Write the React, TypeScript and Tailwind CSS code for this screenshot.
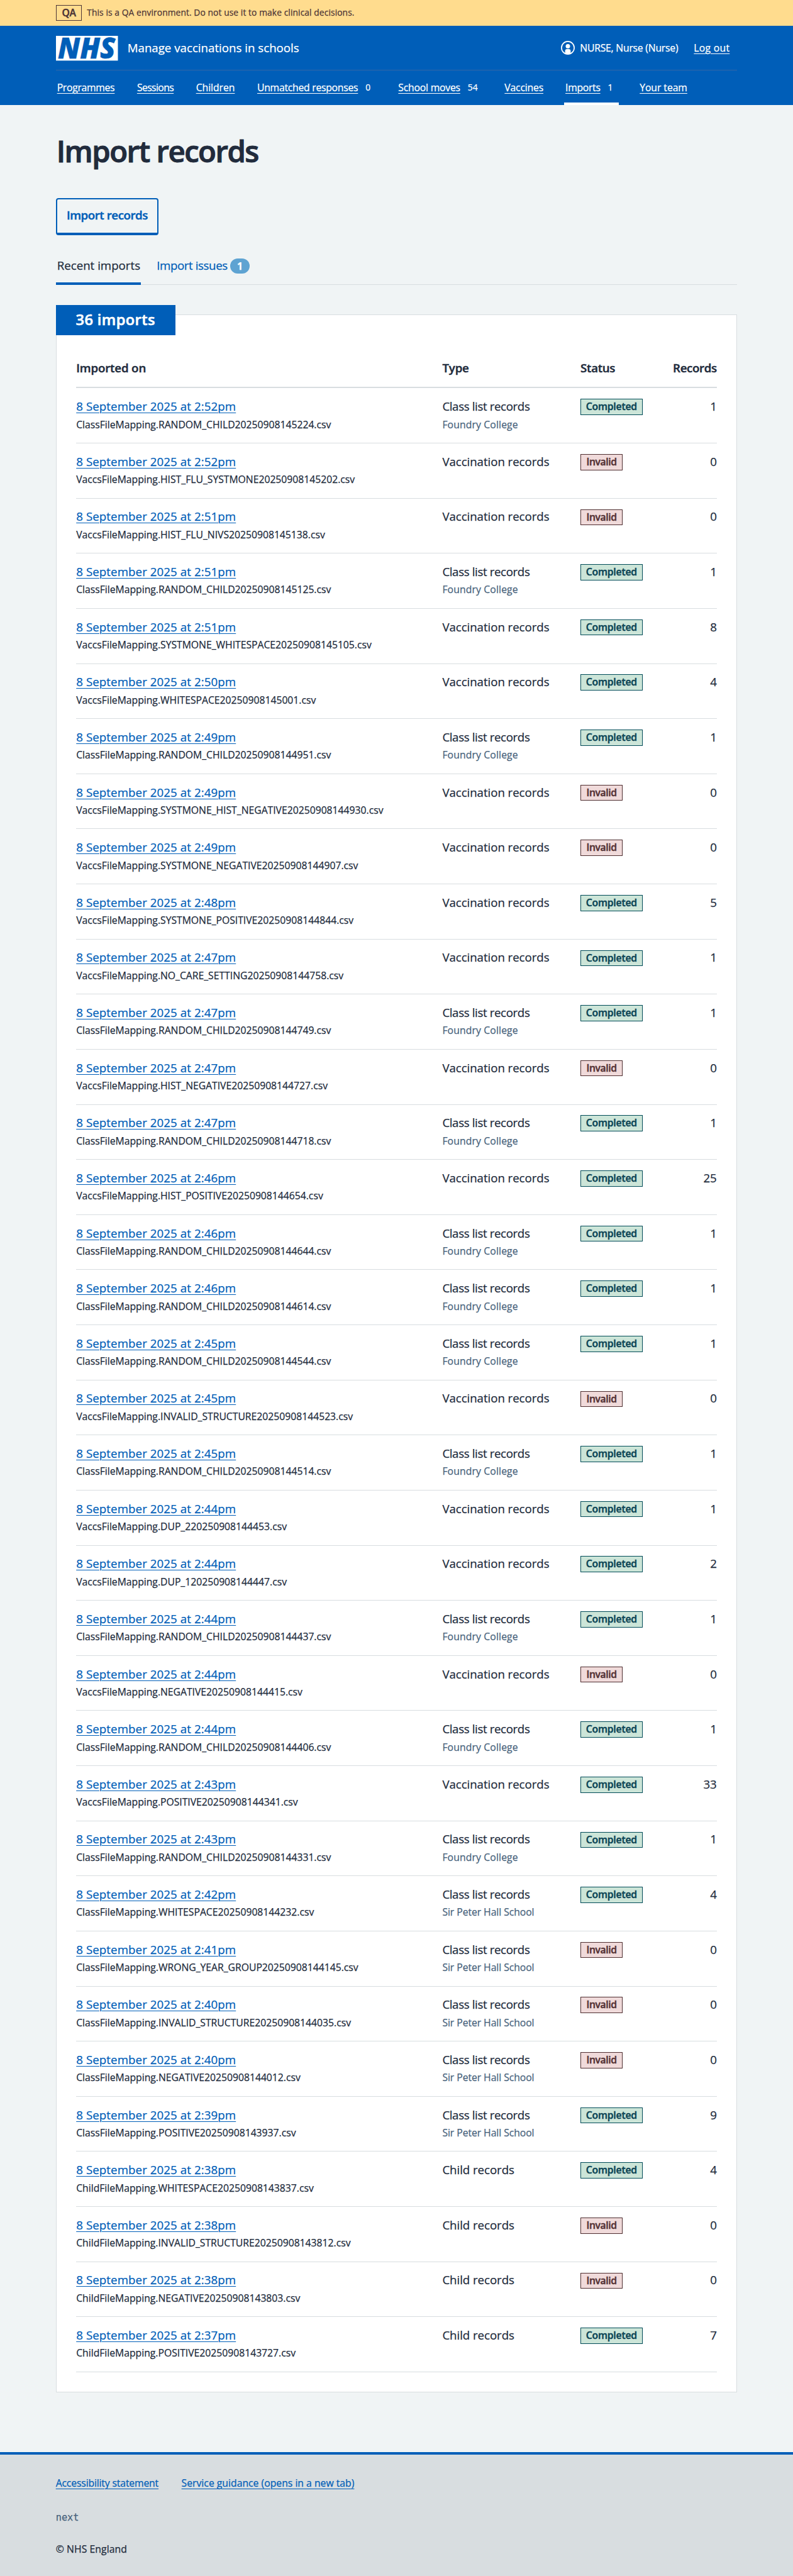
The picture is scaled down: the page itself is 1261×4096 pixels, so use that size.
type ImportRow = {
  time: string;
  file: string;
  type: "Class list" | "Vaccination" | "Child";
  school?: string;
  status: "Completed" | "Invalid";
  records: number;
};

const FC = "Foundry College";
const SP = "Sir Peter Hall School";

const cls = (time: string, name: string, status: ImportRow["status"], records: number, school = FC): ImportRow => ({
  time,
  file: `ClassFileMapping.${name}.csv`,
  type: "Class list",
  school,
  status,
  records,
});
const vac = (time: string, name: string, status: ImportRow["status"], records: number): ImportRow => ({
  time,
  file: `VaccsFileMapping.${name}.csv`,
  type: "Vaccination",
  status,
  records,
});
const child = (time: string, name: string, status: ImportRow["status"], records: number): ImportRow => ({
  time,
  file: `ChildFileMapping.${name}.csv`,
  type: "Child",
  status,
  records,
});

const rows: ImportRow[] = [
  cls("2:52pm", "RANDOM_CHILD20250908145224", "Completed", 1),
  vac("2:52pm", "HIST_FLU_SYSTMONE20250908145202", "Invalid", 0),
  vac("2:51pm", "HIST_FLU_NIVS20250908145138", "Invalid", 0),
  cls("2:51pm", "RANDOM_CHILD20250908145125", "Completed", 1),
  vac("2:51pm", "SYSTMONE_WHITESPACE20250908145105", "Completed", 8),
  vac("2:50pm", "WHITESPACE20250908145001", "Completed", 4),
  cls("2:49pm", "RANDOM_CHILD20250908144951", "Completed", 1),
  vac("2:49pm", "SYSTMONE_HIST_NEGATIVE20250908144930", "Invalid", 0),
  vac("2:49pm", "SYSTMONE_NEGATIVE20250908144907", "Invalid", 0),
  vac("2:48pm", "SYSTMONE_POSITIVE20250908144844", "Completed", 5),
  vac("2:47pm", "NO_CARE_SETTING20250908144758", "Completed", 1),
  cls("2:47pm", "RANDOM_CHILD20250908144749", "Completed", 1),
  vac("2:47pm", "HIST_NEGATIVE20250908144727", "Invalid", 0),
  cls("2:47pm", "RANDOM_CHILD20250908144718", "Completed", 1),
  vac("2:46pm", "HIST_POSITIVE20250908144654", "Completed", 25),
  cls("2:46pm", "RANDOM_CHILD20250908144644", "Completed", 1),
  cls("2:46pm", "RANDOM_CHILD20250908144614", "Completed", 1),
  cls("2:45pm", "RANDOM_CHILD20250908144544", "Completed", 1),
  vac("2:45pm", "INVALID_STRUCTURE20250908144523", "Invalid", 0),
  cls("2:45pm", "RANDOM_CHILD20250908144514", "Completed", 1),
  vac("2:44pm", "DUP_220250908144453", "Completed", 1),
  vac("2:44pm", "DUP_120250908144447", "Completed", 2),
  cls("2:44pm", "RANDOM_CHILD20250908144437", "Completed", 1),
  vac("2:44pm", "NEGATIVE20250908144415", "Invalid", 0),
  cls("2:44pm", "RANDOM_CHILD20250908144406", "Completed", 1),
  vac("2:43pm", "POSITIVE20250908144341", "Completed", 33),
  cls("2:43pm", "RANDOM_CHILD20250908144331", "Completed", 1),
  cls("2:42pm", "WHITESPACE20250908144232", "Completed", 4, SP),
  cls("2:41pm", "WRONG_YEAR_GROUP20250908144145", "Invalid", 0, SP),
  cls("2:40pm", "INVALID_STRUCTURE20250908144035", "Invalid", 0, SP),
  cls("2:40pm", "NEGATIVE20250908144012", "Invalid", 0, SP),
  cls("2:39pm", "POSITIVE20250908143937", "Completed", 9, SP),
  child("2:38pm", "WHITESPACE20250908143837", "Completed", 4),
  child("2:38pm", "INVALID_STRUCTURE20250908143812", "Invalid", 0),
  child("2:38pm", "NEGATIVE20250908143803", "Invalid", 0),
  child("2:37pm", "POSITIVE20250908143727", "Completed", 7),
];

const typeSpacing = {
  "Class list": "tracking-[-0.37px]",
  Vaccination: "tracking-[-0.06px]",
  Child: "tracking-[-0.06px]",
};

function NhsLogo() {
  return (
    <svg viewBox="0 0 100 40" className="h-[39.4px] w-[98.5px] shrink-0 overflow-visible" aria-label="NHS">
      <rect width="100" height="40" fill="#fff" />
      <text
        x="3"
        y="36.5"
        fontFamily="Open Sans, sans-serif"
        fontSize="46.5"
        fontWeight="800"
        fontStyle="italic"
        fill="#005eb8"
        stroke="#005eb8"
        strokeWidth="0.5"
        textLength="93"
        lengthAdjust="spacingAndGlyphs"
      >
        NHS
      </text>
    </svg>
  );
}

function UserIcon() {
  return (
    <svg viewBox="0 0 22 22" className="h-[22px] w-[22px] shrink-0">
      <circle cx="11" cy="11" r="10.1" fill="none" stroke="#fff" strokeWidth="1.7" />
      <circle cx="11" cy="8.4" r="3.5" fill="#fff" />
      <path d="M6.6 19.4v-3.2a3.2 3.2 0 0 1 3.2-3.2h2.4a3.2 3.2 0 0 1 3.2 3.2v3.2c-1.3.9-2.8 1.3-4.4 1.3s-3.1-.4-4.4-1.3z" fill="#fff" />
    </svg>
  );
}

function NavItem({ label, className, count, active }: { label: string; className: string; count?: string; active?: boolean }) {
  return (
    <li className={`relative flex h-full items-center px-[2px] ${className}`}>
      <a href="#" className="underline decoration-1 underline-offset-[2.5px]">{label}</a>
      {count && <span className="ml-[12px] text-[13.8px] tracking-normal">{count}</span>}
      {active && <span className="absolute bottom-0 left-0 h-[4px] w-[87px] bg-white" />}
    </li>
  );
}

function Row({ row }: { row: ImportRow }) {
  const done = row.status === "Completed";
  return (
    <div className="grid h-[87.63px] grid-cols-[582.2px_219.7px_1fr_auto] border-b border-[#d8dde0] pt-[14.7px] leading-[27.6px]">
      <div>
        <a href="#" className="block w-fit tracking-[0.085px] text-[#005eb8] underline decoration-1 underline-offset-[2.5px]">
          8 September 2025 at {row.time}
        </a>
        <div className="mt-[3.8px] text-[15.76px] leading-[23.6px] tracking-[-0.02px]">{row.file}</div>
      </div>
      <div>
        <div className={typeSpacing[row.type]}>{row.type} records</div>
        {row.school && (
          <div
            className={
              row.school === SP
                ? "mt-[3.8px] text-[15.76px] leading-[23.6px] tracking-[-0.07px] text-[#48637c]"
                : "mt-[3.8px] text-[15.76px] leading-[23.6px] tracking-[0.12px] text-[#48637c]"
            }
          >
            {row.school}
          </div>
        )}
      </div>
      <div>
        <strong
          className={
            done
              ? "mt-[2.2px] block h-[25.6px] w-[98.5px] border border-[#004b57] bg-[#cce5d8] text-center text-[15.76px] leading-[23.6px] font-semibold tracking-[-0.2px] text-[#0b4455] [-webkit-text-stroke:0.45px]"
              : "mt-[2.2px] block h-[25.6px] w-[67px] border border-[#4f2e30] bg-[#f0dada] text-center text-[15.76px] leading-[23.6px] font-semibold tracking-[-0.4px] text-[#553236] [-webkit-text-stroke:0.45px]"
          }
        >
          {row.status}
        </strong>
      </div>
      <div className="text-right">{row.records}</div>
    </div>
  );
}

export default function App() {
  return (
    <div className="flex min-h-[4096px] w-[1261px] flex-col bg-[#f0f4f5] font-['Open_Sans','Noto_Sans',sans-serif] text-[18.7px] text-[#212b3c] [-webkit-text-stroke:0.25px]">
      <div className="h-[41.4px] bg-[#ffdc8e] px-[88.7px] text-[#4d3536]">
        <div className="flex h-full items-center">
          <strong className="flex h-[25.6px] w-[41.6px] items-center justify-center border border-[#4d3536] text-[15.76px] font-semibold tracking-[-0.3px] [-webkit-text-stroke:0.45px]">QA</strong>
          <span className="ml-[8px] text-[13.8px] tracking-[0.09px]">
            This is a QA environment. Do not use it to make clinical decisions.
          </span>
        </div>
      </div>

      <header className="h-[126px] bg-[#005eb8] px-[88.7px] text-white">
        <div className="flex h-[70.9px] items-center border-b border-[#3467a6]">
          <NhsLogo />
          <a href="#" className="-mt-[1px] ml-[15.5px]">Manage vaccinations in schools</a>
          <div className="mr-[12px] ml-auto flex items-center text-[15.76px]">
            <UserIcon />
            <span className="ml-[8px] tracking-[-0.23px]">NURSE, Nurse (Nurse)</span>
            <a href="#" className="ml-[25px] tracking-[0.27px] underline decoration-1 underline-offset-[2.5px]">Log out</a>
          </div>
        </div>
        <ul className="flex h-[55.1px] text-[15.76px]">
          <NavItem label="Programmes" className="w-[127.2px] tracking-[-0.3px]" />
          <NavItem label="Sessions" className="w-[93.8px] tracking-[-0.6px]" />
          <NavItem label="Children" className="w-[97.3px] tracking-[-0.05px]" />
          <NavItem label="Unmatched responses" className="w-[224.4px] tracking-[-0.26px]" count="0" />
          <NavItem label="School moves" className="w-[169px] tracking-[-0.22px]" count="54" />
          <NavItem label="Vaccines" className="w-[96.7px] tracking-[-0.2px]" />
          <NavItem label="Imports" className="w-[118.2px] tracking-[-0.3px]" count="1" active />
          <NavItem label="Your team" className="tracking-[-0.07px]" />
        </ul>
      </header>

      <main className="mx-[88.7px]">
        <h1 className="mt-[44.6px] h-[56px] pl-px text-[47.3px] leading-[56px] font-semibold tracking-[-1.5px] [-webkit-text-stroke:1px]">Import records</h1>
        <button className="mt-[47.2px] flex h-[59.1px] w-[163.5px] justify-center rounded-[4px] border-2 border-b-4 border-[#005eb8] pt-[11px] leading-[28px] font-semibold tracking-[-0.45px] text-[#005eb8] [-webkit-text-stroke:0.45px]">
          Import records
        </button>

        <nav className="mt-[18.8px] flex h-[60px] border-b border-[#d8dde0] leading-[28px]">
          <a href="#" className="-mb-px w-[135px] border-b-4 border-[#005eb8] pt-[15.2px] pl-[2px]">Recent imports</a>
          <a href="#" className="flex pt-[15.2px] pl-[25.5px] text-[#005eb8]">
            <span className="tracking-[-0.4px]">Import issues</span>
            <span className="mt-[3px] ml-[4px] flex h-[24px] w-[31.5px] items-center justify-center rounded-full bg-[#5ea3d2] text-[15.76px] font-bold text-white">1</span>
          </a>
        </nav>

        <section className="mt-[47.2px] h-[3304.2px] border border-[#d8dde0] bg-white">
          <h2 className="-mt-[15.8px] -ml-px h-[47.3px] w-[190px] bg-[#005eb8] text-center text-[23.6px] leading-[47px] font-semibold tracking-[0.4px] text-white [-webkit-text-stroke:0.6px]">
            36 imports
          </h2>
          <div className="mx-[31.5px]">
            <div className="mt-[38.5px] grid h-[46.2px] grid-cols-[582.2px_219.7px_1fr_auto] border-b-2 border-[#d8dde0] leading-[28px] font-semibold [-webkit-text-stroke:0.45px]">
              <div className="tracking-[-0.15px]">Imported on</div>
              <div className="tracking-[-0.15px]">Type</div>
              <div className="tracking-[-0.3px]">Status</div>
              <div className="tracking-[-0.35px]">Records</div>
            </div>
            {rows.map((row) => (
              <Row key={row.file} row={row} />
            ))}
          </div>
        </section>
      </main>

      <footer className="mt-auto h-[197px] border-t-4 border-[#005eb8] bg-[#d8dde0] px-[88.7px] pt-[33px] text-[15.76px] leading-[24px]">
        <div className="flex gap-[36.5px] text-[#005eb8]">
          <a href="#" className="tracking-[-0.16px] underline decoration-1 underline-offset-[2.5px]">Accessibility statement</a>
          <a href="#" className="underline decoration-1 underline-offset-[2.5px]">Service guidance (opens in a new tab)</a>
        </div>
        <div className="mt-[31px] font-['DejaVu_Sans_Mono','Liberation_Mono',monospace] text-[15.3px] text-[#48637c]">next</div>
        <div className="mt-[25.5px] tracking-[0.07px]">© NHS England</div>
      </footer>
    </div>
  );
}
